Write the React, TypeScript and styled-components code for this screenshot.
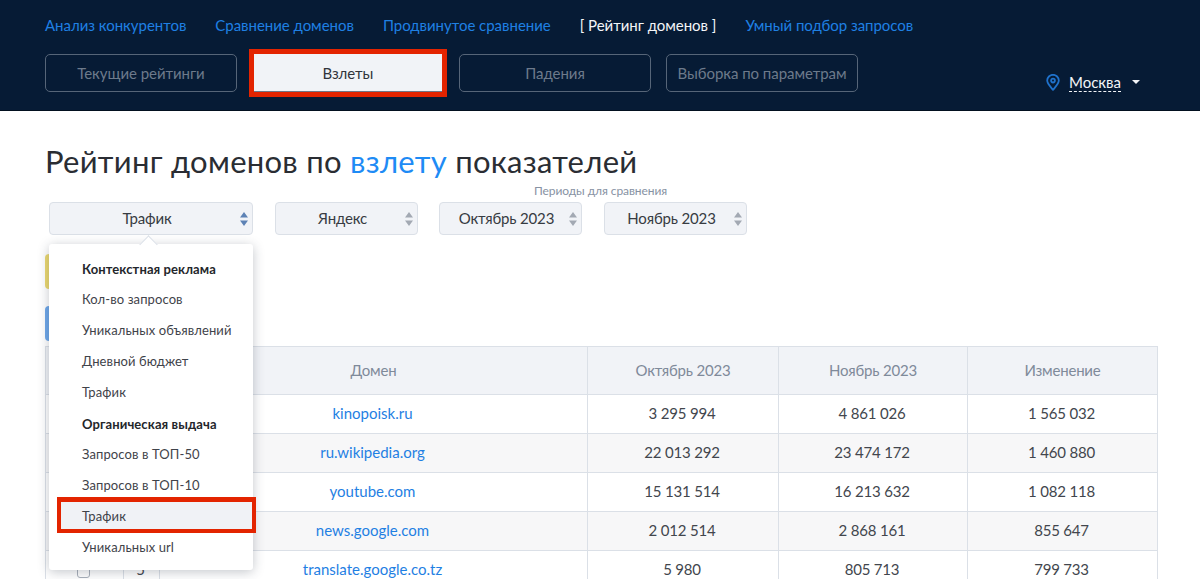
import React from "react";
import styled, { createGlobalStyle } from "styled-components";

const Global = createGlobalStyle`
  html, body { margin: 0; padding: 0; background: #fff; }
  body { font-family: "Lato", "Open Sans", "Noto Sans", sans-serif; color: #2b2f36; }
  #root { height: 579px; overflow: hidden; }
  * { box-sizing: border-box; }
`;

const Page = styled.div`
  width: 1200px;
  height: 579px;
  overflow: hidden;
`;

const Header = styled.header`
  height: 111px;
  background: #061b35;
  border-bottom: 1px solid #02101f;
  padding: 16px 0 0 45px;
  position: relative;
`;

const Nav = styled.nav`
  display: flex;
  gap: 29px;
  height: 38px;
`;

const NavLink = styled.a<{ $active?: boolean }>`
  font-size: 15px;
  line-height: 18px;
  letter-spacing: -0.03px;
  color: ${(p) => (p.$active ? "#f3f5f8" : "#1f80e3")};
  white-space: pre;
`;

const Tabs = styled.div`
  display: flex;
  gap: 15px;
`;

const Tab = styled.button<{ $active?: boolean }>`
  position: relative;
  width: 192px;
  height: 38px;
  padding: 0;
  border-radius: ${(p) => (p.$active ? "0" : "5px")};
  border: 1px solid ${(p) => (p.$active ? "#f1f3f7" : "#566578")};
  border-bottom-color: ${(p) => (p.$active ? "#6f7686" : "#566578")};
  background: ${(p) => (p.$active ? "#f1f3f7" : "transparent")};
  color: ${(p) => (p.$active ? "#30343b" : "#6d7a8b")};
  font: inherit;
  font-size: 15px;
  letter-spacing: -0.05px;
  ${(p) =>
    p.$active &&
    `&::after {
      content: "";
      position: absolute;
      left: -4px; right: -4px; top: -6px; bottom: -6px;
      border: 5px solid #e32400;
    }`}
`;

const City = styled.div`
  position: absolute;
  left: 1046px;
  top: 72px;
  display: flex;
  align-items: center;
  height: 20px;
`;

const CityName = styled.span`
  margin-left: 9px;
  font-size: 15px;
  line-height: 18px;
  color: #f3f5f8;
  border-bottom: 1px dashed #f3f5f8;
`;

const Caret = styled.span`
  margin-left: 11px;
  width: 0;
  height: 0;
  border-left: 4px solid transparent;
  border-right: 4px solid transparent;
  border-top: 4px solid #f3f5f8;
`;

const Main = styled.main`
  padding: 30px 42px 0 45px;
`;

const Title = styled.h1`
  margin: 0;
  font-size: 31px;
  line-height: 40px;
  font-weight: 400;
  letter-spacing: 0.28px;
  color: #2a2d33;
`;

const Accent = styled.span`
  color: #1e8bf5;
`;

const Filters = styled.div`
  position: relative;
  display: flex;
  margin: 21px 0 0 4px;
  height: 33px;
`;

const PeriodLabel = styled.span`
  position: absolute;
  left: 485px;
  top: -18px;
  font-size: 12px;
  line-height: 14px;
  letter-spacing: -0.08px;
  color: #8792a3;
`;

const Select = styled.div<{ $w: number; $ml?: number }>`
  position: relative;
  flex: none;
  width: ${(p) => p.$w}px;
  margin-left: ${(p) => p.$ml ?? 0}px;
  height: 33px;
  background: #f1f3f7;
  border: 1px solid #dbe0e7;
  border-radius: 4px;
  font-size: 15px;
  line-height: 31px;
  letter-spacing: -0.15px;
  color: #373b42;
  padding-right: 8px;
  text-align: center;
`;

const Spin = styled.svg`
  position: absolute;
  right: 4px;
  top: 9px;
`;

const Menu = styled.div`
  position: absolute;
  z-index: 5;
  left: 0;
  top: 42px;
  width: 204px;
  height: 326px;
  padding: 10px 0 0 0;
  background: #fff;
  border-radius: 3px;
  box-shadow: 0 2px 12px rgba(40, 50, 70, 0.28);
  &::before {
    content: "";
    position: absolute;
    left: 93px;
    top: -6px;
    width: 12px;
    height: 12px;
    transform: rotate(45deg);
    background: #fff;
    border-left: 1px solid #dbe0e7;
    border-top: 1px solid #dbe0e7;
  }
`;

const MenuItem = styled.div<{ $head?: boolean; $marked?: boolean }>`
  position: relative;
  height: 31px;
  margin-left: 12px;
  padding-left: 21px;
  font-size: 13px;
  line-height: ${(p) => (p.$head ? "30px" : "28px")};
  letter-spacing: 0.1px;
  font-weight: ${(p) => (p.$head ? 700 : 400)};
  color: ${(p) => (p.$head ? "#23262b" : "#3f434a")};
  background: ${(p) => (p.$marked ? "#f0f2f6" : "transparent")};
  ${(p) =>
    p.$marked &&
    `&::after {
      content: "";
      position: absolute;
      left: -4px; right: -3px; top: -5px; bottom: 0;
      border: 4px solid #e32400;
      border-top-width: 5px;
    }`}
`;

const Actions = styled.div`
  display: flex;
  flex-direction: column;
  gap: 17px;
  margin-top: 19px;
  height: 92px;
`;

const ActionBtn = styled.div<{ $c: string }>`
  width: 120px;
  height: 35px;
  border-radius: 4px;
  background: ${(p) => p.$c};
`;

const Grid = styled.table`
  width: 1112px;
  table-layout: fixed;
  border-collapse: collapse;
  font-size: 15px;
`;

const Th = styled.th`
  height: 48px;
  padding: 0 0 2px;
  font-weight: 400;
  background: #f1f3f7;
  color: #7f8a9a;
  border: 1px solid #dbe0e7;
  letter-spacing: -0.2px;
`;

const Row = styled.tr<{ $alt?: boolean }>`
  background: ${(p) => (p.$alt ? "#f7f7f8" : "#fff")};
`;

const Td = styled.td`
  height: 39px;
  padding: 0 2px 2px 0;
  text-align: center;
  border: 1px solid #dbe0e7;
  color: #42464d;
  letter-spacing: -0.2px;
`;

const DomainLink = styled.a`
  color: #1f80e3;
  letter-spacing: 0;
`;

const Check = styled.span`
  display: inline-block;
  width: 13px;
  height: 13px;
  border: 1px solid #a9b0ba;
  border-radius: 3px;
  vertical-align: middle;
`;

const rows = [
  ["kinopoisk.ru", "3 295 994", "4 861 026", "1 565 032"],
  ["ru.wikipedia.org", "22 013 292", "23 474 172", "1 460 880"],
  ["youtube.com", "15 131 514", "16 213 632", "1 082 118"],
  ["news.google.com", "2 012 514", "2 868 161", "855 647"],
  ["translate.google.co.tz", "5 980", "805 713", "799 733"],
];

const menu: [string, boolean, boolean][] = [
  ["Контекстная реклама", true, false],
  ["Кол-во запросов", false, false],
  ["Уникальных объявлений", false, false],
  ["Дневной бюджет", false, false],
  ["Трафик", false, false],
  ["Органическая выдача", true, false],
  ["Запросов в ТОП-50", false, false],
  ["Запросов в ТОП-10", false, false],
  ["Трафик", false, true],
  ["Уникальных url", false, false],
];

const Arrows = ({ c }: { c: string }) => (
  <Spin width="8" height="14" viewBox="0 0 8 14">
    <path d="M4 0 L8 5.5 H0 Z M4 14 L8 8.5 H0 Z" fill={c} />
  </Spin>
);

export default function App() {
  return (
    <Page>
      <Global />
      <Header>
        <Nav>
          <NavLink>Анализ конкурентов</NavLink>
          <NavLink>Сравнение доменов</NavLink>
          <NavLink>Продвинутое сравнение</NavLink>
          <NavLink $active>[ Рейтинг доменов ]</NavLink>
          <NavLink>Умный подбор запросов</NavLink>
        </Nav>
        <Tabs>
          <Tab>Текущие рейтинги</Tab>
          <Tab $active>Взлеты</Tab>
          <Tab>Падения</Tab>
          <Tab>Выборка по параметрам</Tab>
        </Tabs>
        <City>
          <svg width="14" height="17" viewBox="0 0 14 17" fill="none" stroke="#1f72cc" strokeWidth="1.8">
            <path d="M7 15.8 C4.4 12.6 1.2 9.8 1.2 6.6 A5.8 5.8 0 0 1 12.8 6.6 C12.8 9.8 9.6 12.6 7 15.8 Z" />
            <circle cx="7" cy="6.6" r="1.9" />
          </svg>
          <CityName>Москва</CityName>
          <Caret />
        </City>
      </Header>
      <Main>
        <Title>
          Рейтинг доменов по <Accent>взлету</Accent> показателей
        </Title>
        <Filters>
          <PeriodLabel>Периоды для сравнения</PeriodLabel>
          <Select $w={204}>
            Трафик
            <Arrows c="#5d82b5" />
          </Select>
          <Select $w={143} $ml={22}>
            Яндекс
            <Arrows c="#a3a9b3" />
          </Select>
          <Select $w={143} $ml={21}>
            Октябрь 2023
            <Arrows c="#a3a9b3" />
          </Select>
          <Select $w={143} $ml={22}>
            Ноябрь 2023
            <Arrows c="#a3a9b3" />
          </Select>
          <Menu>
            {menu.map(([label, head, marked], i) => (
              <MenuItem key={i} $head={head} $marked={marked}>
                {label}
              </MenuItem>
            ))}
          </Menu>
        </Filters>
        <Actions>
          <ActionBtn $c="#ecd96f" />
          <ActionBtn $c="#6ea8ea" />
        </Actions>
        <Grid>
          <colgroup>
            <col style={{ width: 78 }} />
            <col style={{ width: 36 }} />
            <col style={{ width: 428 }} />
            <col style={{ width: 191 }} />
            <col style={{ width: 189 }} />
            <col style={{ width: 190 }} />
          </colgroup>
          <thead>
            <tr>
              <Th />
              <Th />
              <Th>Домен</Th>
              <Th>Октябрь 2023</Th>
              <Th>Ноябрь 2023</Th>
              <Th>Изменение</Th>
            </tr>
          </thead>
          <tbody>
            {rows.map((r, i) => (
              <Row key={r[0]} $alt={i % 2 === 1}>
                <Td>
                  <Check />
                </Td>
                <Td>{i + 1}</Td>
                <Td>
                  <DomainLink>{r[0]}</DomainLink>
                </Td>
                <Td>{r[1]}</Td>
                <Td>{r[2]}</Td>
                <Td>{r[3]}</Td>
              </Row>
            ))}
          </tbody>
        </Grid>
      </Main>
    </Page>
  );
}
